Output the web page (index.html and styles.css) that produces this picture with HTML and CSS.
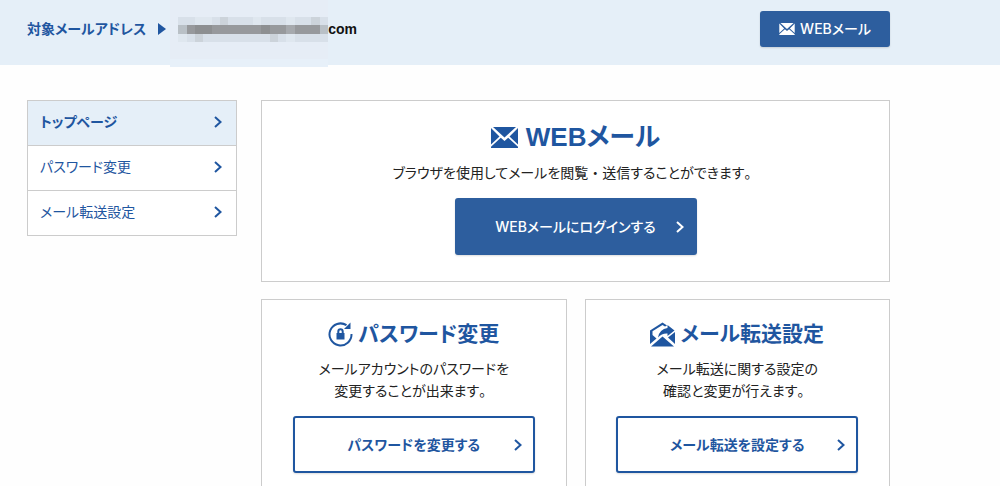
FILE: index.html
```html
<!DOCTYPE html>
<html lang="ja">
<head>
<meta charset="utf-8">
<title>WEBメール トップページ</title>
<link rel="stylesheet" href="styles.css">
</head>
<body>
<svg class="defs" aria-hidden="true">
  <symbol id="mail" viewBox="0 0 27 21">
    <path d="M2 0H25L13.500 10.500zM0 1L8.500 9.500L0 17.500zM27 1V17.500L18.500 9.500zM0 21V19.800L9.800 10.800L13.500 14L17.200 10.800L27 19.800V21z"/>
  </symbol>
  <symbol id="chevron" viewBox="0 0 8 12">
    <path d="M1 1L6.500 6L1 11" fill="none" stroke="currentColor" stroke-width="2"/>
  </symbol>
</svg>
<header class="header">
  <div class="container header-row">
    <p class="address">
      <span class="address-label">対象メールアドレス</span>
      <svg class="marker" viewBox="0 0 8 12" aria-hidden="true"><path d="M0 0L8 6L0 12z"/></svg>
      <span class="address-value"><svg class="mosaic" viewBox="0 0 19 8" preserveAspectRatio="none" shape-rendering="crispEdges" aria-hidden="true">
        <path fill="#e6edf6" d="M0 0H19V7H0z"/>
        <path fill="#e7f0f9" d="M0 7H19V8H0z"/>
        <path fill="#d8e0e9" d="M1 2H19V3H1zM1 4H19V5H1z"/>
        <path fill="#dfe7ef" d="M3 2H5V3H3zM10 2H11V3H10zM14 2H15V3H14zM1 4H2V5H1zM14 4H15V5H14z"/>
        <path fill="#ccd3da" d="M6 2H7V3H6zM17 2H18V3H17zM3 4H4V5H3zM12 4H13V5H12z"/>
        <path fill="#b9c0c6" d="M1 3H2V4H1zM18 3H19V4H18z"/>
        <path fill="#97999c" d="M2 3H18V4H2z"/>
        <path fill="#8d8f91" d="M3 3H5V4H3zM11 3H12V4H11z"/>
        <path fill="#a6a9ad" d="M14 3H15V4H14z"/>
      </svg>com</span>
    </p>
    <a class="button button-small" href="#"><svg class="mail-small" aria-hidden="true"><use href="#mail"/></svg>WEBメール</a>
  </div>
</header>
<div class="container layout">
  <nav class="side">
    <a class="side-link current" href="#">トップページ<svg class="chevron" aria-hidden="true"><use href="#chevron"/></svg></a>
    <a class="side-link" href="#">パスワード変更<svg class="chevron" aria-hidden="true"><use href="#chevron"/></svg></a>
    <a class="side-link" href="#">メール転送設定<svg class="chevron" aria-hidden="true"><use href="#chevron"/></svg></a>
  </nav>
  <main class="cards">
    <section class="card card-wide">
      <h1 class="title title-large"><svg class="mail-large" aria-hidden="true"><use href="#mail"/></svg>WEBメール</h1>
      <p class="text">ブラウザを使用してメールを閲覧<span class="full">・</span>送信することができます<span class="full">。</span></p>
      <a class="button" href="#">WEBメールにログインする<svg class="chevron" aria-hidden="true"><use href="#chevron"/></svg></a>
    </section>
    <section class="card">
      <h2 class="title"><svg class="icon" viewBox="0 0 25 25" aria-hidden="true">
        <path d="M18.500 3.200A11 11 0 1 0 23.500 12" fill="none" stroke="currentColor" stroke-width="2"/>
        <path d="M22.500 0.500V7H16z"/>
        <path d="M8.500 11H16.500V17.500H8.500z"/>
        <path d="M10.300 11.500V9.500A2.200 2.200 0 0 1 14.700 9.500V11.500" fill="none" stroke="currentColor" stroke-width="2"/>
      </svg>パスワード変更</h2>
      <p class="text">メールアカウントのパスワードを<br>変更することが出来ます<span class="full">。</span></p>
      <a class="button button-outline" href="#">パスワードを変更する<svg class="chevron" aria-hidden="true"><use href="#chevron"/></svg></a>
    </section>
    <section class="card">
      <h2 class="title"><svg class="icon" viewBox="0 0 25 25" aria-hidden="true">
        <path d="M0 8.500L12.500 0.500L17 3.500L15 4.500L12.500 3L2.500 9.200V13L6.500 16.500L0 22z"/>
        <path d="M17.500 3L24.500 8.500L17.500 14V11.500Q12 11 8 15.500Q9.500 7 17.500 6z"/>
        <path d="M25 10V22L18 15.500z"/>
        <path d="M1 24.500L12.500 14.500L24 24.500z"/>
      </svg>メール転送設定</h2>
      <p class="text">メール転送に関する設定の<br>確認と変更が行えます<span class="full">。</span></p>
      <a class="button button-outline" href="#">メール転送を設定する<svg class="chevron" aria-hidden="true"><use href="#chevron"/></svg></a>
    </section>
  </main>
</div>
</body>
</html>
```
FILE: styles.css
```css
* { box-sizing: border-box; }
body {
  margin: 0;
  background: #fefefe;
  color: #222;
  font: 14px/22px "Liberation Sans", "Noto Sans CJK JP", sans-serif;
  font-feature-settings: "palt";
}
a { color: inherit; text-decoration: none; }
p, h1, h2 { margin: 0; }
svg { flex: none; fill: currentColor; }
.defs { display: none; }
.full { font-feature-settings: normal; }
.container { max-width: 890px; padding-left: 27px; }
.header { background: #e5eff8; }
.header-row {
  display: flex;
  align-items: center;
  justify-content: space-between;
  padding-top: 11px;
  padding-bottom: 18px;
}
.address { display: flex; align-items: center; gap: 12px; font-weight: bold; }
.address-label { color: #1f56a0; }
.marker { width: 8px; height: 12px; color: #1f56a0; }
.address-value { position: relative; padding-left: 150px; color: #111; }
.mosaic { position: absolute; left: -8px; top: -18px; width: 158px; height: 67px; }
.button {
  display: flex;
  align-items: center;
  justify-content: center;
  position: relative;
  width: 242px;
  height: 57px;
  border: 2px solid #2d5e9e;
  border-radius: 3px;
  background: #2d5e9e;
  color: #fff;
  font-family: Inter, "Noto Sans CJK JP", sans-serif;
  font-weight: 500;
  box-shadow: 0 1px 2px #0002;
}
.button .chevron { position: absolute; right: 11px; }
.button-small { width: 130px; height: 36px; gap: 5px; }
.button-outline { border-color: #1f56a0; background: #fff; color: #1f56a0; font-weight: bold; }
.mail-small { width: 16px; height: 12px; }
.chevron { width: 8px; height: 12px; }
.layout { display: flex; align-items: flex-start; gap: 24px; padding-top: 35px; }
.side { width: 210px; border: 1px solid #ccc; color: #1f56a0; background: #fff; }
.side-link {
  display: flex;
  align-items: center;
  justify-content: space-between;
  height: 45px;
  padding: 0 14px 2px 12px;
}
.side-link + .side-link { border-top: 1px solid #ccc; }
.side .current { height: 44px; background: #e5eff8; font-weight: bold; }
.cards { flex: 1; display: grid; grid-template-columns: 1fr 1fr; gap: 17px 18px; }
.card {
  display: flex;
  flex-direction: column;
  align-items: center;
  padding: 18px 20px 26px;
  border: 1px solid #ccc;
  background: #fff;
  text-align: center;
}
.card-wide { grid-column: 1 / -1; }
.title {
  display: flex;
  align-items: center;
  gap: 5px;
  margin-bottom: 8px;
  color: #1f56a0;
  font-size: 21px;
  line-height: 32px;
}
.title-large { gap: 8px; margin-bottom: 7px; font-size: 26px; line-height: 36px; }
.mail-large { width: 27px; height: 21px; }
.icon { width: 25px; height: 25px; }
.text { margin-bottom: 14px; }
```
